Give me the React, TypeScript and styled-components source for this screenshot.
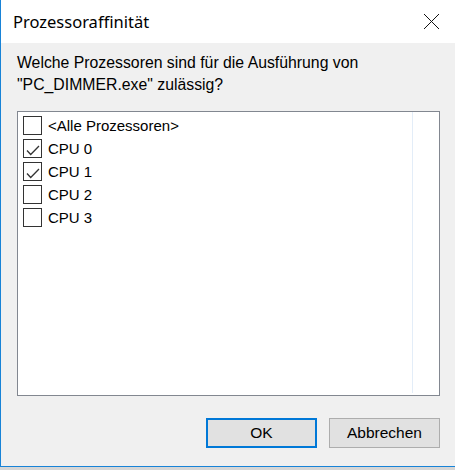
import * as React from 'react';
import styled, { createGlobalStyle } from 'styled-components';

const GlobalStyle = createGlobalStyle`
  html, body {
    margin: 0;
    padding: 0;
    background: #f0f0f0;
  }
`;

interface ICpu {
  label: string;
  checked: boolean;
}

const cpus: ICpu[] = [
  { label: '<Alle Prozessoren>', checked: false },
  { label: 'CPU 0', checked: true },
  { label: 'CPU 1', checked: true },
  { label: 'CPU 2', checked: false },
  { label: 'CPU 3', checked: false },
];

const Frame = styled.div`
  width: 455px;
  height: 470px;
  display: flex;
  flex-direction: column;
  background: linear-gradient(#bdbdbd, #d6d6d6);
  overflow: hidden;
`;

const Window = styled.div`
  height: 467px;
  box-sizing: border-box;
  border-left: 1px solid #1883d7;
  border-bottom: 1px solid #1883d7;
  display: flex;
  flex-direction: column;
  background: #f0f0f0;
`;

const TitleBar = styled.div`
  height: 43px;
  flex: none;
  background: #fff;
  display: flex;
  align-items: center;
  justify-content: space-between;
  padding: 0 15px 0 12px;
`;

const Title = styled.div`
  font-family: 'Noto Sans', sans-serif;
  font-size: 16.5px;
  color: #000;
  margin-top: -1px;
`;

const CloseButton = styled.div`
  width: 17px;
  height: 17px;
  display: flex;
  margin-top: -1px;
`;

const Body = styled.div`
  flex: 1;
  display: flex;
  flex-direction: column;
  padding: 9px 15px 0 16px;
  font-family: 'Liberation Sans', Arial, sans-serif;
  font-size: 15px;
  color: #000;
`;

const Prompt = styled.div`
  font-size: 15.8px;
  line-height: 22px;
`;

const ListBox = styled.div`
  position: relative;
  margin-top: 15px;
  height: 285px;
  box-sizing: border-box;
  border: 1px solid #828790;
  background: #fff;
  padding: 2px 5px;
`;

const ColumnLine = styled.div`
  position: absolute;
  top: 0;
  bottom: 2px;
  left: 394px;
  width: 1px;
  background: #e3edf8;
`;

const Row = styled.label`
  display: flex;
  align-items: center;
  height: 23px;
  gap: 6px;
`;

const Box = styled.span`
  width: 19px;
  height: 19px;
  box-sizing: border-box;
  border: 1px solid #333;
  background: #fff;
  display: flex;
  flex: none;
`;

const Buttons = styled.div`
  display: flex;
  justify-content: flex-end;
  gap: 12px;
  margin-top: 22px;
`;

const Button = styled.button<{ $default?: boolean }>`
  width: 111px;
  height: 30px;
  box-sizing: border-box;
  background: #e1e1e1;
  border: ${(p) => (p.$default ? '2px solid #0078d7' : '1px solid #adadad')};
  font-family: 'Liberation Sans', Arial, sans-serif;
  font-size: 15.5px;
  color: #000;
  padding: 0;
`;

const Check = () => (
  <svg width="17" height="17" viewBox="0 0 17 17">
    <path d="M3 10.5 L6.7 14.5 L15 6" fill="none" stroke="#333" strokeWidth="1.3" />
  </svg>
);

const App = () => (
  <Frame>
    <GlobalStyle />
    <Window>
      <TitleBar>
        <Title>Prozessoraffinität</Title>
        <CloseButton>
          <svg width="17" height="17" viewBox="0 0 17 17">
            <path d="M1 1 L16 16 M16 1 L1 16" stroke="#111" strokeWidth="1" />
          </svg>
        </CloseButton>
      </TitleBar>
      <Body>
        <Prompt>
          Welche Prozessoren sind für die Ausführung von
          <br />
          "PC_DIMMER.exe" zulässig?
        </Prompt>
        <ListBox>
          <ColumnLine />
          {cpus.map((cpu) => (
            <Row key={cpu.label}>
              <Box>{cpu.checked && <Check />}</Box>
              <span>{cpu.label}</span>
            </Row>
          ))}
        </ListBox>
        <Buttons>
          <Button $default>OK</Button>
          <Button>Abbrechen</Button>
        </Buttons>
      </Body>
    </Window>
  </Frame>
);

export default App;
